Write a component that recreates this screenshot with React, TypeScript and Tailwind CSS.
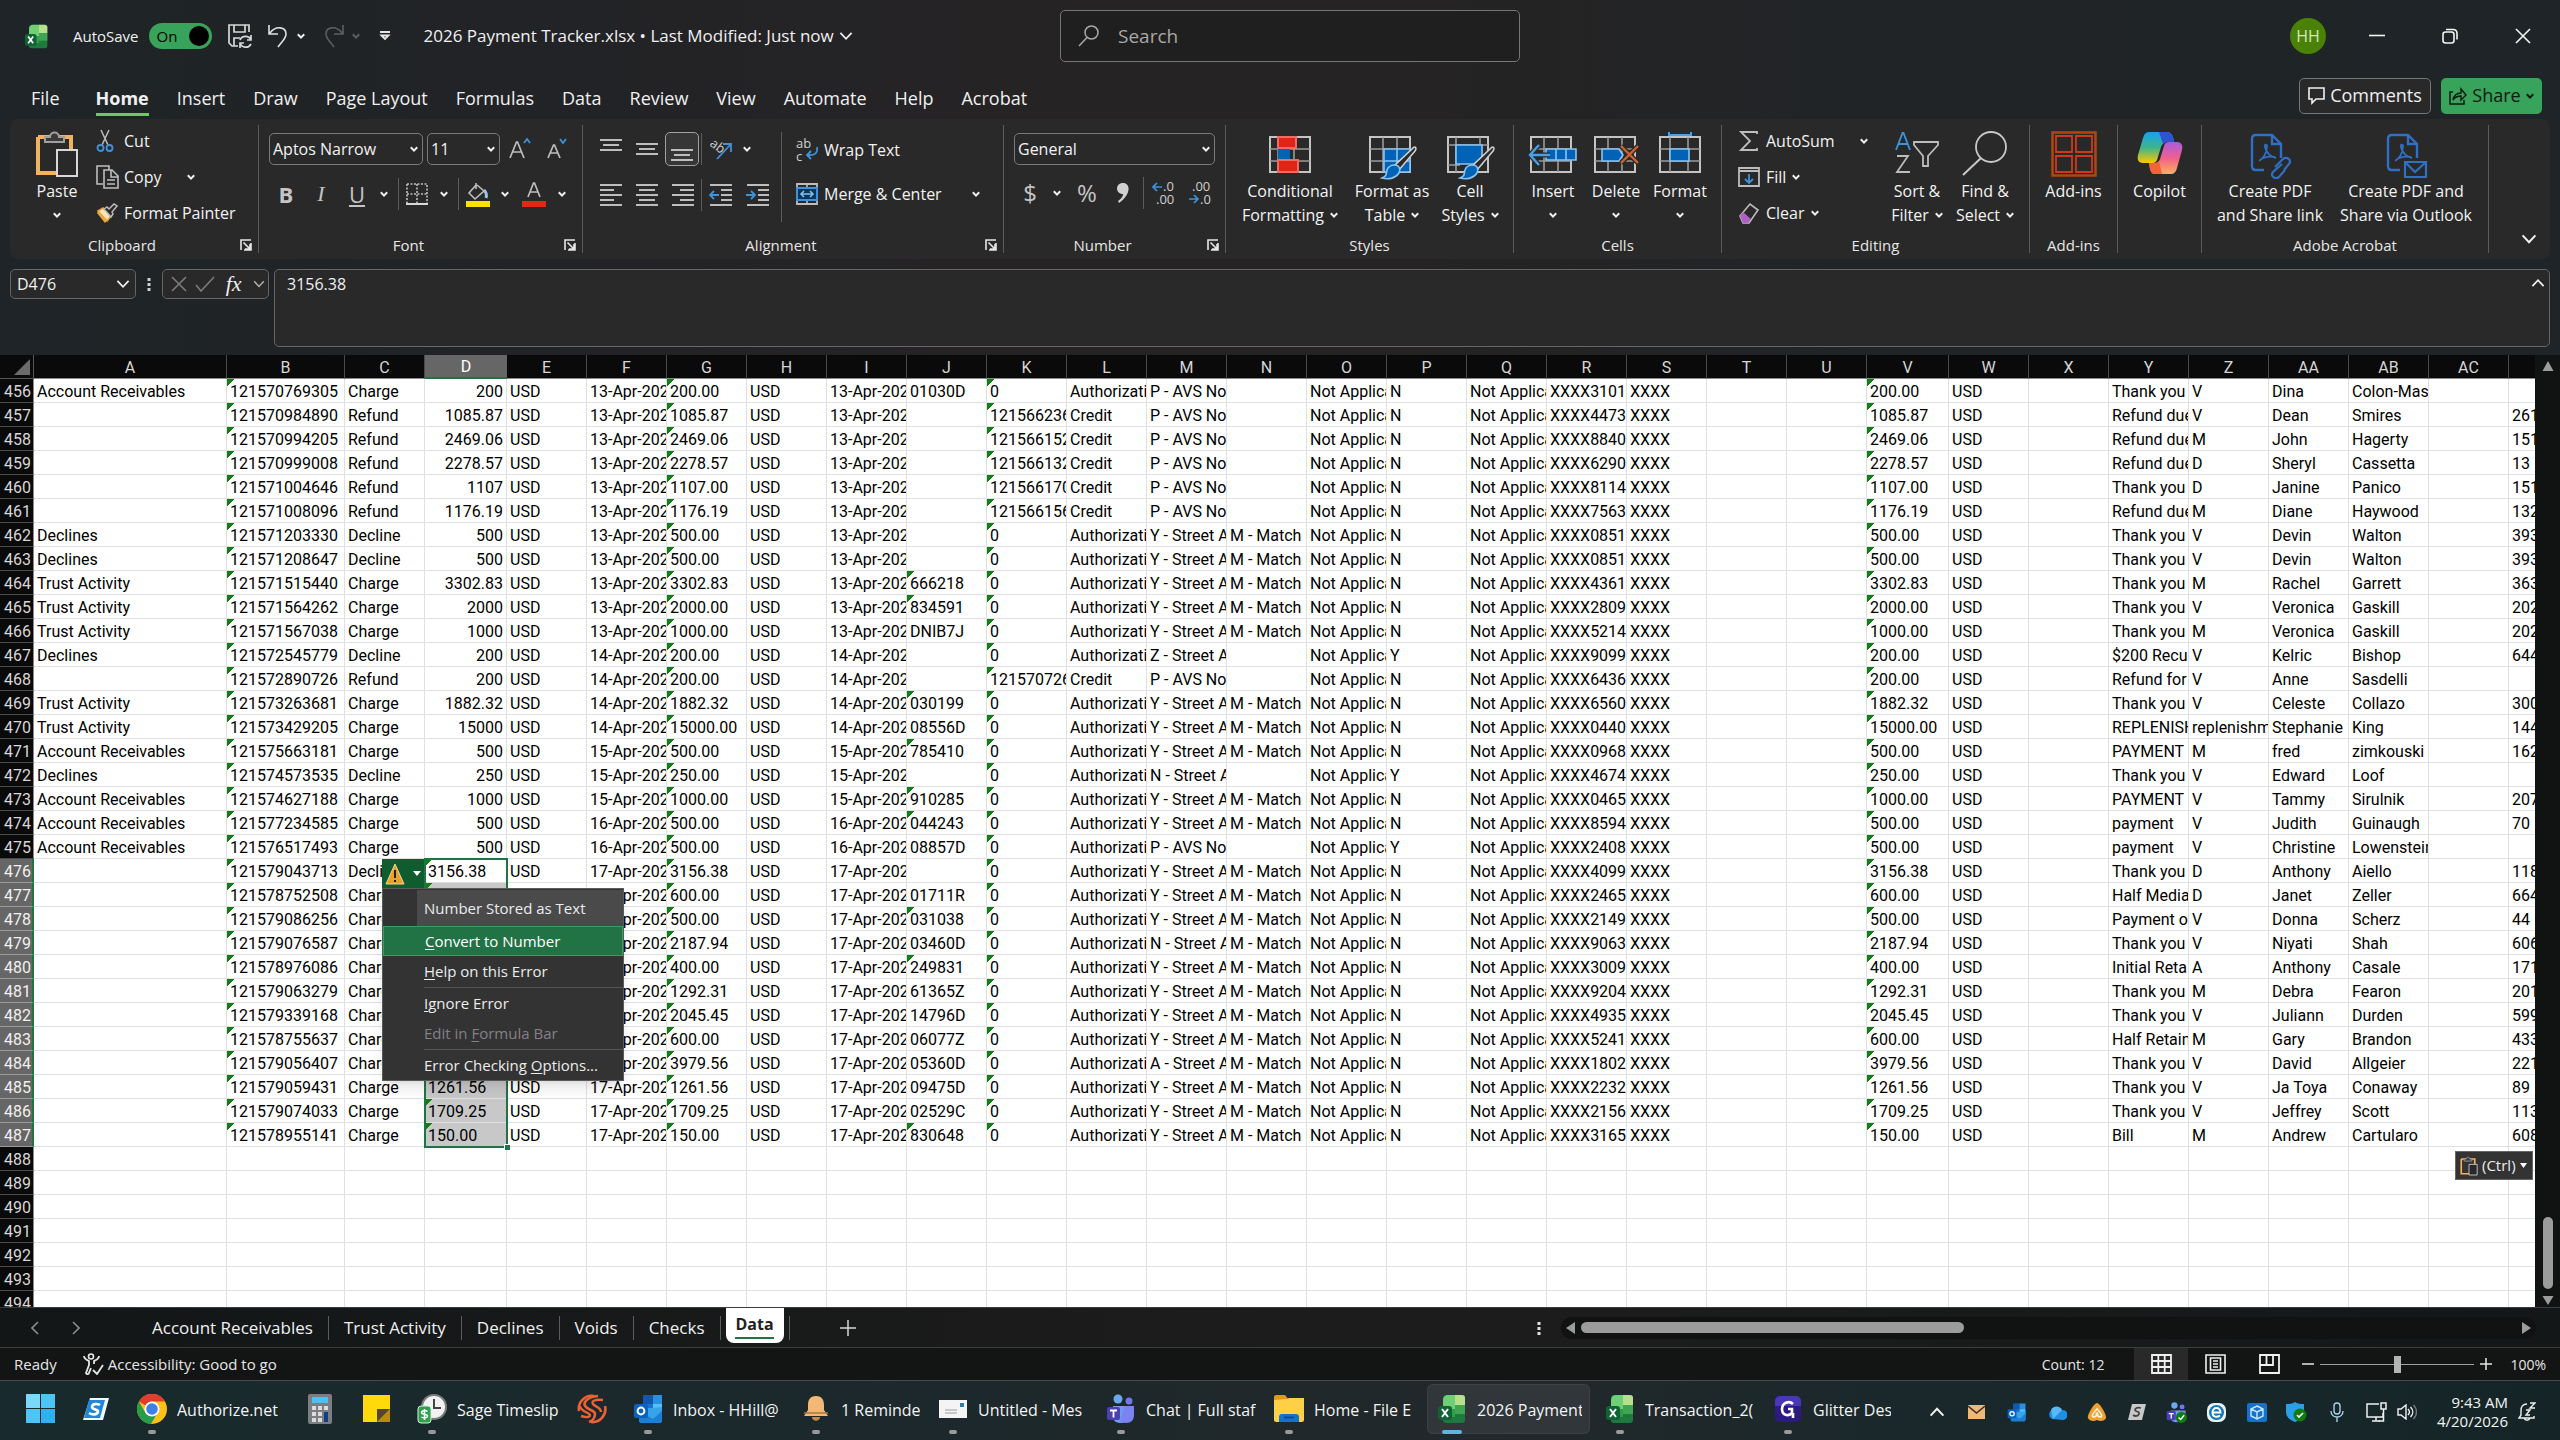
import React from "react";

type Kids = { children?: React.ReactNode };

const Svg = ({ w, h, children, vw = w, vh = h }: { w: number; h: number; vw?: number; vh?: number } & Kids) => (
  <svg width={w} height={h} viewBox={`0 0 ${vw} ${vh}`} fill="none" aria-hidden="true" className="block shrink-0">
    {children}
  </svg>
);

const Chev = ({ s = 8, c = "#f0f0f0", sw = 2 }: { s?: number; c?: string; sw?: number }) => (
  <Svg w={s} h={s} vw={8} vh={8}>
    <path d="M.8 2.2 4 5.6 7.2 2.2" stroke={c} strokeWidth={sw} />
  </Svg>
);

/* ---------- sheet data ---------- */

const AR = "Account Receivables";
const TA = "Trust Activity";
const DE = "Declines";
const TY = "Thank you f";
const RD = "Refund due";

type Row = [string, string, string, string, number, string, string, string, string, string, string, string, string, string, string, string];

const rows: Row[] = [
  [AR, "121570769305", "Charge", "200", 13, "01030D", "0", "P", "", "N", "3101", TY, "V", "Dina", "Colon-Mas", ""],
  ["", "121570984890", "Refund", "1085.87", 13, "", "121566236", "P", "", "N", "4473", RD, "V", "Dean", "Smires", "261"],
  ["", "121570994205", "Refund", "2469.06", 13, "", "121566152", "P", "", "N", "8840", RD, "M", "John", "Hagerty", "151"],
  ["", "121570999008", "Refund", "2278.57", 13, "", "121566132", "P", "", "N", "6290", RD, "D", "Sheryl", "Cassetta", "13"],
  ["", "121571004646", "Refund", "1107", 13, "", "121566170", "P", "", "N", "8114", TY, "D", "Janine", "Panico", "151"],
  ["", "121571008096", "Refund", "1176.19", 13, "", "121566156", "P", "", "N", "7563", RD, "M", "Diane", "Haywood", "132"],
  [DE, "121571203330", "Decline", "500", 13, "", "0", "Y", "M", "N", "0851", TY, "V", "Devin", "Walton", "393"],
  [DE, "121571208647", "Decline", "500", 13, "", "0", "Y", "M", "N", "0851", TY, "V", "Devin", "Walton", "393"],
  [TA, "121571515440", "Charge", "3302.83", 13, "666218", "0", "Y", "M", "N", "4361", TY, "M", "Rachel", "Garrett", "363"],
  [TA, "121571564262", "Charge", "2000", 13, "834591", "0", "Y", "M", "N", "2809", TY, "V", "Veronica", "Gaskill", "202"],
  [TA, "121571567038", "Charge", "1000", 13, "DNIB7J", "0", "Y", "M", "N", "5214", TY, "M", "Veronica", "Gaskill", "202"],
  [DE, "121572545779", "Decline", "200", 14, "", "0", "Z", "", "Y", "9099", "$200 Recu", "V", "Kelric", "Bishop", "644"],
  ["", "121572890726", "Refund", "200", 14, "", "121570726", "P", "", "N", "6436", "Refund for", "V", "Anne", "Sasdelli", ""],
  [TA, "121573263681", "Charge", "1882.32", 14, "030199", "0", "Y", "M", "N", "6560", TY, "V", "Celeste", "Collazo", "300"],
  [TA, "121573429205", "Charge", "15000", 14, "08556D", "0", "Y", "M", "N", "0440", "REPLENISH", "replenishm", "Stephanie", "King", "144"],
  [AR, "121575663181", "Charge", "500", 15, "785410", "0", "Y", "M", "N", "0968", "PAYMENT", "M", "fred", "zimkouski", "162"],
  [DE, "121574573535", "Decline", "250", 15, "", "0", "N", "", "Y", "4674", TY, "V", "Edward", "Loof", ""],
  [AR, "121574627188", "Charge", "1000", 15, "910285", "0", "Y", "M", "N", "0465", "PAYMENT", "V", "Tammy", "Sirulnik", "207"],
  [AR, "121577234585", "Charge", "500", 16, "044243", "0", "Y", "M", "N", "8594", "payment", "V", "Judith", "Guinaugh", "70"],
  [AR, "121576517493", "Charge", "500", 16, "08857D", "0", "P", "", "Y", "2408", "payment", "V", "Christine", "Lowenstein", ""],
  ["", "121579043713", "Decline", "3156.38", 17, "", "0", "Y", "M", "N", "4099", TY, "D", "Anthony", "Aiello", "118"],
  ["", "121578752508", "Charge", "600", 17, "01711R", "0", "Y", "M", "N", "2465", "Half Media", "D", "Janet", "Zeller", "664"],
  ["", "121579086256", "Charge", "500", 17, "031038", "0", "Y", "M", "N", "2149", "Payment of", "V", "Donna", "Scherz", "44"],
  ["", "121579076587", "Charge", "2187.94", 17, "03460D", "0", "N", "M", "N", "9063", TY, "V", "Niyati", "Shah", "606"],
  ["", "121578976086", "Charge", "400", 17, "249831", "0", "Y", "M", "N", "3009", "Initial Reta", "A", "Anthony", "Casale", "171"],
  ["", "121579063279", "Charge", "1292.31", 17, "61365Z", "0", "Y", "M", "N", "9204", TY, "M", "Debra", "Fearon", "201"],
  ["", "121579339168", "Charge", "2045.45", 17, "14796D", "0", "Y", "M", "N", "4935", TY, "V", "Juliann", "Durden", "599"],
  ["", "121578755637", "Charge", "600", 17, "06077Z", "0", "Y", "M", "N", "5241", "Half Retain", "M", "Gary", "Brandon", "433"],
  ["", "121579056407", "Charge", "3979.56", 17, "05360D", "0", "A", "M", "N", "1802", TY, "V", "David", "Allgeier", "221"],
  ["", "121579059431", "Charge", "1261.56", 17, "09475D", "0", "Y", "M", "N", "2232", TY, "V", "Ja Toya", "Conaway", "89"],
  ["", "121579074033", "Charge", "1709.25", 17, "02529C", "0", "Y", "M", "N", "2156", TY, "V", "Jeffrey", "Scott", "113"],
  ["", "121578955141", "Charge", "150", 17, "830648", "0", "Y", "M", "N", "3165", "Bill", "M", "Andrew", "Cartularo", "608"],
];

const letters = "A B C D E F G H I J K L M N O P Q R S T U V W X Y Z AA AB AC".split(" ");
const colWidth: Record<string, string> = { A: "w-[193px]", B: "w-[118px]", D: "w-[82px]", V: "w-[82px]" };

const expand = (r: Row, selected: boolean): string[] => {
  const [a, b, c, d, day, j, k, m, n, p, x, y, z, first, last, ad] = r;
  const fixed = Number(d).toFixed(2);
  const date = `${day}-Apr-202`;
  return [
    a, b, c, selected ? fixed : d, "USD", date, fixed, "USD", date, j, k,
    c === "Refund" ? "Credit" : "Authorizati",
    m === "P" ? "P - AVS Not" : `${m} - Street A`,
    n ? "M - Match" : "", "Not Applica", p, "Not Applica", `XXXX${x}`, "XXXX", "", "",
    fixed, "USD", "", y, z, first, last, "", ad,
  ];
};

const flagged = (col: number, v: string, selected: boolean) =>
  v !== "" && (col === 1 || col === 6 || col === 10 || col === 21 || (col === 3 && selected) || (col === 9 && /^\d+$/.test(v)));

const Sheet = () => (
  <table className="w-full min-w-[2589px] table-fixed border-separate border-spacing-0 font-[Roboto,sans-serif] text-[16px] leading-[21px] text-black">
    <colgroup>
      <col className="w-[34px]" />
      {letters.map((l) => (
        <col key={l} className={colWidth[l] ?? "w-[80px]"} />
      ))}
      <col />
    </colgroup>
    <thead>
      <tr className="h-6 bg-[#0a0a0a] text-[#d6d6d6]">
        <th className="border-r border-b border-[#555] p-0">
          <div className="flex h-[23px] items-end justify-end pr-[3px] pb-[3px]">
            <Svg w={16} h={16}>
              <path d="M16 0v16H0z" fill="#6b6b6b" />
            </Svg>
          </div>
        </th>
        {letters.map((l) => (
          <th
            key={l}
            scope="col"
            className={
              l === "D"
                ? "border-b-2 border-[#217346] bg-[#666] p-0 pt-px font-normal text-white"
                : "border-r border-b border-r-[#4a4a4a] border-b-[#8a8a8a] p-0 pt-px font-normal"
            }
          >
            {l}
          </th>
        ))}
        <th className="border-b border-b-[#8a8a8a] p-0" />
      </tr>
    </thead>
    <tbody>
      {Array.from({ length: 39 }, (_, i) => {
        const selected = i >= 20 && i <= 31;
        const cells = i < rows.length ? expand(rows[i], selected) : Array(30).fill("");
        return (
          <tr key={i} className="h-6">
            <th
              scope="row"
              className={
                selected
                  ? "border-r-2 border-b border-r-[#217346] border-b-[#9a9a9a] bg-[#666] p-0 pt-[2px] pr-px text-right font-normal text-[#f0f0f0]"
                  : "border-r border-b border-r-[#8a8a8a] border-b-[#4a4a4a] bg-[#0a0a0a] p-0 pt-[2px] pr-[2px] text-right font-normal text-[#d6d6d6]"
              }
            >
              {456 + i}
            </th>
            {cells.map((v: string, c: number) => (
              <td
                key={c}
                className={[
                  "overflow-hidden border-r border-b border-[#e0e0e0] px-[3px] pt-[2px] pb-0 whitespace-nowrap",
                  c === 3 && !selected ? "text-right" : "text-left",
                  c === 3 && selected && i > 20 ? "bg-[#c8c8c8]" : "",
                  flagged(c, v, selected) ? "bg-[linear-gradient(135deg,#108010_5px,transparent_5px)]" : "",
                ].join(" ")}
              >
                {v}
              </td>
            ))}
          </tr>
        );
      })}
    </tbody>
  </table>
);

const MenuItem = ({ pre = "", k, post, cls = "" }: { pre?: string; k: string; post: string; cls?: string }) => (
  <button type="button" role="menuitem" className={`flex h-[30px] w-full items-center pl-[41px] text-left ${cls}`}>
    <span>
      {pre}
      <u className="underline-offset-2">{k}</u>
      {post}
    </span>
  </button>
);

const ErrorMenu = () => (
  <div role="menu" className="w-[242px] border border-[#5a5a5a] bg-[#333] text-[15px] text-[#ececec] shadow-lg">
    <div className="ml-[34px] mt-px flex h-9 items-center bg-[#4a4a4a] pl-[7px]">Number Stored as Text</div>
    <MenuItem k="C" post="onvert to Number" cls="border border-[#2fa35c] bg-[#217346] pl-[40px] text-white" />
    <MenuItem k="H" post="elp on this Error" />
    <div className="mt-px ml-[41px] h-px bg-[#555]" />
    <MenuItem k="I" post="gnore Error" />
    <MenuItem pre="Edit in " k="F" post="ormula Bar" cls="text-[#858085]" />
    <div className="mt-px ml-[41px] h-px bg-[#555]" />
    <MenuItem pre="Error Checking " k="O" post="ptions..." />
  </div>
);

/* ---------- ribbon parts ---------- */

const Sep = () => <div className="my-[6px] w-px shrink-0 bg-[#5c5c5c]" />;
const VBar = ({ cls = "h-8" }: { cls?: string }) => <div className={`w-px shrink-0 bg-[#5c5c5c] ${cls}`} />;

const Launcher = ({ name }: { name: string }) => (
  <button type="button" aria-label={`${name} settings`} className="mx-auto">
    <Svg w={12} h={12}>
      <path d="M1 11V1h10M11 4v7H4M3.5 3.5l6 6M10 5v5H5" stroke="#e6e6e6" strokeWidth={1.6} />
    </Svg>
  </button>
);

const Group = ({ w, label, launch, children }: { w: string; label: string; launch?: boolean } & Kids) => (
  <section aria-label={label || "Copilot"} className={`flex shrink-0 flex-col ${w}`}>
    <div className="flex h-[115px]">{children}</div>
    <div className="flex h-[22px] items-center text-center text-[15px] text-[#e6e6e6]">
      <span className="flex-1 whitespace-nowrap">{label}</span>
      {launch && (
        <span className="flex w-6">
          <Launcher name={label} />
        </span>
      )}
    </div>
  </section>
);

const Big = ({ w, icon, l1, l2, chev }: { w: string; icon: React.ReactNode; l1: string; l2?: string; chev?: boolean }) => (
  <button type="button" className={`flex shrink-0 flex-col items-center pt-3 leading-6 ${w}`}>
    <span className="flex h-12 items-start justify-center">{icon}</span>
    <span className="whitespace-nowrap">{l1}</span>
    {(l2 || chev) && (
      <span className="flex h-6 items-center gap-[6px] whitespace-nowrap">
        {l2}
        {chev && <Chev />}
      </span>
    )}
  </button>
);

const Small = ({ icon, label, chev, gap = "gap-[6px]" }: { icon: React.ReactNode; label: string; chev?: boolean; gap?: string }) => (
  <button type="button" className={`flex h-9 items-center whitespace-nowrap ${gap}`}>
    <span className="flex items-center">
      <span className="flex w-7 justify-start">{icon}</span>
      {label}
    </span>
    {chev && <Chev />}
  </button>
);

const Ib = ({ w, label, cls = "", children }: { w: string; label: string; cls?: string } & Kids) => (
  <button type="button" aria-label={label} className={`flex shrink-0 items-center justify-center ${w} ${cls}`}>
    {children}
  </button>
);

const Combo = ({ w, label, value }: { w: string; label: string; value: string }) => (
  <div className={`relative flex h-8 shrink-0 items-center rounded-[5px] border border-[#7a7a7a] bg-[#292929] ${w}`}>
    <select aria-label={label} className="h-full w-full appearance-none bg-transparent pl-[3px] outline-none">
      <option>{value}</option>
    </select>
    <span className="pointer-events-none absolute right-1">
      <Chev />
    </span>
  </div>
);

const g = "#bdbdbd";
const b = "#3f92dc";

const Lines = ({ xs }: { xs: [number, number, number][] }) => (
  <Svg w={24} h={24}>
    {xs.map(([x, y, w]) => (
      <path key={y} d={`M${x} ${y}h${w}`} stroke={g} strokeWidth={2} />
    ))}
  </Svg>
);

const Grid = ({ children, vx = [13, 27] }: { children?: React.ReactNode; vx?: number[] }) => (
  <>
    <path d="M3 6h40v35H3z" stroke="#c4c4c4" strokeWidth={2} />
    <path d={`M3 18h40M3 30h40${vx.map((x) => `M${x + 3} 6v35`).join("")}`} stroke="#9a9a9a" strokeWidth={1.6} />
    {children}
  </>
);

const Brush = () => (
  <>
    <path d="M45 18c3-4 5-1 3 2L32 39l-5-4z" fill="#292929" stroke="#d0d0d0" strokeWidth={1.6} />
    <path d="M28 34c4 0 6 4 4 8-3 5-10 7-17 5 5-2 4-4 5-8 1-3 4-5 8-5z" fill="#0063b8" stroke="#8ac3ef" strokeWidth={1.6} />
  </>
);

const PasteIcon = ({ w = 44, h = 46 }: { w?: number; h?: number }) => (
  <Svg w={w} h={h} vw={44} vh={46}>
    <path d="M3 6h33v14M36 20v-14M22 42H3V6" stroke="#f2b35c" strokeWidth={4} />
    <path d="M10 11V6h5c0-6 9-6 9 0h5v5z" fill="#3a3a3a" stroke="#a0a0a0" strokeWidth={2} />
    <path d="M22 19h20v26H22z" fill="#292929" stroke="#d8d8d8" strokeWidth={2} />
  </Svg>
);

const Excel = ({ s = 30 }: { s?: number }) => (
  <Svg w={s} h={s} vw={30} vh={30}>
    <rect x="6" y="1" width="22" height="28" rx="3" fill="#1e7a3c" />
    <path d="M6 12V6a5 5 0 0 1 5-5h7v14H6z" fill="#6fcf74" />
    <path d="M18 1h7a3 3 0 0 1 3 3v7H18z" fill="#b8e08a" />
    <path d="M18 11h10v9H18z" fill="#3fa552" />
    <path d="M6 15h12v8H6z" fill="#2f9e4b" />
    <rect x="1" y="12" width="14" height="14" rx="3" fill="#116335" />
    <path d="m5 15 6 8M11 15l-6 8" stroke="#fff" strokeWidth={2} />
  </Svg>
);

const PdfDoc = ({ children }: Kids) => (
  <Svg w={44} h={48}>
    <path d="M16 39H8c-3 0-4-1-4-4V8c0-3 1-4 4-4h16l9 9v14M24 4v9h9" stroke="#2f6fc4" strokeWidth={2.4} />
    <path d="M11 30c4-2 8-8 8-15 0-2-3-2-2 1 1 6 6 10 11 11M12 29c4-3 10-4 15-3" stroke="#2f6fc4" strokeWidth={1.8} />
    {children}
  </Svg>
);

const Ribbon = () => (
  <div className="mx-[10px] flex h-[140px] shrink-0 rounded-lg bg-[#292929] text-[16px] text-[#f2f2f2]">
    <Group w="w-[248px]" label="Clipboard" launch>
      <div className="w-[22px]" />
      <Big w="w-[50px]" icon={<PasteIcon />} l1="Paste" chev />
      <div className="ml-[14px] flex flex-col pt-1">
        <Small
          label="Cut"
          icon={
            <Svg w={18} h={24}>
              <path d="M5 1l7 15M13 1 6 16" stroke={g} strokeWidth={1.5} />
              <circle cx="4.5" cy="19" r="3" stroke={b} strokeWidth={1.8} />
              <circle cx="13.5" cy="19" r="3" stroke={b} strokeWidth={1.8} />
            </Svg>
          }
        />
        <Small
          label="Copy"
          chev
          gap="gap-[25px]"
          icon={
            <Svg w={24} h={24}>
              <path d="M7 19H1V1h12v4" stroke={g} strokeWidth={1.6} />
              <path d="M8 5h8l6 6v12H8zM15 5v7h7M11 15h8M11 19h8" stroke={g} strokeWidth={1.6} />
            </Svg>
          }
        />
        <Small
          label="Format Painter"
          icon={
            <Svg w={22} h={20}>
              <path d="M2 8l9 9-2 3L1 10z" fill="#f0a93c" />
              <path d="M2 8l5-3 8 8-4 5z" fill="#fbe3b8" stroke="#e7a23e" strokeWidth={1.5} />
              <path d="M8 6l3-2 2 2 5-5 3 2-5 6 1 2-2 3z" fill="#292929" stroke={g} strokeWidth={1.5} />
            </Svg>
          }
        />
      </div>
    </Group>
    <Sep />
    <Group w="w-[323px]" label="Font" launch>
      <div className="flex flex-col gap-3 pt-[14px] pl-[10px]">
        <div className="flex items-center">
          <Combo w="w-[154px]" label="Font name" value="Aptos Narrow" />
          <div className="w-1" />
          <Combo w="w-[73px]" label="Font size" value="11" />
          <Ib w="w-[38px]" label="Increase font size">
            <Svg w={24} h={24}>
              <path d="M3 21 9.5 5h1L17 21M5.500 15h9" stroke={g} strokeWidth={1.7} />
              <path d="m17 6 3-4 3 4" stroke={b} strokeWidth={1.8} />
            </Svg>
          </Ib>
          <Ib w="w-[36px]" label="Decrease font size">
            <Svg w={24} h={24}>
              <path d="M4 21 9.500 8h1L16 21M6 16h8" stroke={g} strokeWidth={1.7} />
              <path d="m16 2 3 4 3-4" stroke={b} strokeWidth={1.8} />
            </Svg>
          </Ib>
        </div>
        <div className="flex h-[34px] items-center text-[22px] leading-6 text-[#c4c4c4]">
          <Ib w="w-[34px]" label="Bold" cls="font-bold">B</Ib>
          <Ib w="w-[36px]" label="Italic" cls="font-['Liberation_Serif',serif] italic">I</Ib>
          <Ib w="w-[36px]" label="Underline" cls="underline underline-offset-2">U</Ib>
          <Ib w="w-[18px]" label="Underline styles"><Chev /></Ib>
          <div className="w-[5px]" />
          <VBar />
          <Ib w="w-[36px]" label="Borders">
            <Svg w={22} h={22}>
              <path d="M1 1h20v19M1 1v19M11 1v19M1 11h20" stroke={g} strokeWidth={1.6} strokeDasharray="2 1.500" />
              <path d="M0 21h22" stroke="#d8d8d8" strokeWidth={2} />
            </Svg>
          </Ib>
          <Ib w="w-[18px]" label="Border styles"><Chev /></Ib>
          <div className="w-[5px]" />
          <VBar />
          <Ib w="w-[38px]" label="Fill colour">
            <Svg w={24} h={26}>
              <path d="M10 2v6M10 4l-7 8 6 6 9-8-7-6" stroke={g} strokeWidth={1.6} />
              <path d="M18 9c2 2 3 5 2 8" stroke="#9fc6e8" strokeWidth={3} />
              <path d="M0 20h24v6H0z" fill="#fde100" />
            </Svg>
          </Ib>
          <Ib w="w-[16px]" label="Fill colours"><Chev /></Ib>
          <Ib w="w-[42px]" label="Font colour">
            <Svg w={24} h={26}>
              <path d="M6 16 11.500 2h1L18 16M8 11h8" stroke={g} strokeWidth={1.7} />
              <path d="M0 20h24v6H0z" fill="#e12a12" />
            </Svg>
          </Ib>
          <Ib w="w-[14px]" label="Font colours"><Chev /></Ib>
        </div>
      </div>
    </Group>
    <Sep />
    <Group w="w-[420px]" label="Alignment" launch>
      <div className="flex flex-col gap-3 pt-[13px] pl-[10px]">
        <div className="flex h-[34px] items-center">
          <Ib w="w-[36px]" label="Top align"><Lines xs={[[1, 3, 22], [4, 8, 16], [1, 13, 22]]} /></Ib>
          <Ib w="w-[36px]" label="Middle align"><Lines xs={[[1, 7, 22], [4, 12, 16], [1, 17, 22]]} /></Ib>
          <Ib w="w-[34px]" label="Bottom align" cls="h-[34px] rounded-[5px] border border-[#a0a0a0] bg-[#363636]">
            <Lines xs={[[1, 13, 22], [4, 18, 16], [1, 23, 22]]} />
          </Ib>
          <div className="w-[2px]" />
          <VBar />
          <Ib w="w-[40px]" label="Orientation">
            <Svg w={24} h={24}>
              <text x="0" y="11" fontSize="13" fill="#d0d0d0" transform="rotate(38 4 8)">ab</text>
              <path d="M7 22 21 7M13 7h8v8" stroke={b} strokeWidth={1.8} />
            </Svg>
          </Ib>
          <Ib w="w-[10px]" label="Orientation options"><Chev /></Ib>
        </div>
        <div className="flex h-[34px] items-center">
          <Ib w="w-[36px]" label="Align left"><Lines xs={[[1, 2, 22], [1, 7, 14], [1, 12, 22], [1, 17, 14], [1, 22, 22]]} /></Ib>
          <Ib w="w-[36px]" label="Centre"><Lines xs={[[1, 2, 22], [4, 7, 16], [1, 12, 22], [4, 17, 16], [1, 22, 22]]} /></Ib>
          <Ib w="w-[36px]" label="Align right"><Lines xs={[[1, 2, 22], [9, 7, 14], [1, 12, 22], [9, 17, 14], [1, 22, 22]]} /></Ib>
          <VBar />
          <Ib w="w-[38px]" label="Decrease indent">
            <Svg w={24} h={24}>
              <path d="M1 2h22M12 7h11M12 12h11M12 17h11M1 22h22" stroke={g} strokeWidth={2} />
              <path d="M10 12H1M5 8l-4 4 4 4" stroke={b} strokeWidth={1.8} />
            </Svg>
          </Ib>
          <Ib w="w-[36px]" label="Increase indent">
            <Svg w={24} h={24}>
              <path d="M1 2h22M12 7h11M12 12h11M12 17h11M1 22h22" stroke={g} strokeWidth={2} />
              <path d="M0 12h9M5 8l4 4-4 4" stroke={b} strokeWidth={1.8} />
            </Svg>
          </Ib>
        </div>
      </div>
      <VBar cls="mt-[13px] ml-[5px] h-[90px]" />
      <div className="flex flex-col gap-2 pt-[13px] pl-[14px]">
        <Small
          label="Wrap Text"
          icon={
            <Svg w={24} h={24}>
              <text x="0" y="10" fontSize="13" fill="#d0d0d0">ab</text>
              <text x="0" y="23" fontSize="13" fill="#d0d0d0">c</text>
              <path d="M21 9c1 6-2 9-10 8M15 13l-4 4 4 4" stroke={b} strokeWidth={1.8} />
            </Svg>
          }
        />
        <Small
          label="Merge & Center"
          chev
          gap="gap-[30px]"
          icon={
            <Svg w={22} h={24}>
              <path d="M1 2h20v20H1z" stroke={g} strokeWidth={1.8} />
              <path d="M11 2v4M11 18v4" stroke={g} strokeWidth={1.6} />
              <path d="M1 6h20v12H1z" fill="#0f3558" stroke={b} strokeWidth={2} />
              <path d="M5 12h12M8 9l-3 3 3 3M14 9l3 3-3 3" stroke="#7cc0f5" strokeWidth={1.6} />
            </Svg>
          }
        />
      </div>
    </Group>
    <Sep />
    <Group w="w-[221px]" label="Number" launch>
      <div className="flex flex-col gap-3 pt-[14px] pl-[10px]">
        <Combo w="w-[201px]" label="Number format" value="General" />
        <div className="flex h-8 items-center text-[24px] text-[#c4c4c4]">
          <Ib w="w-[32px]" label="Accounting format">$</Ib>
          <Ib w="w-[22px]" label="Accounting styles"><Chev /></Ib>
          <Ib w="w-[38px]" label="Percent">%</Ib>
          <Ib w="w-[34px]" label="Comma style">
            <Svg w={14} h={22}>
              <path d="M7 1c8 0 8 12-4 20l-1-2c4-3 5-5 5-7-8 0-8-11 0-11z" fill="#d0d0d0" />
            </Svg>
          </Ib>
          <div className="w-[3px]" />
          <VBar />
          <Ib w="w-[40px]" label="Increase decimal">
            <Svg w={24} h={26}>
              <text x="11" y="11" fontSize="13" fill="#d0d0d0">.0</text>
              <text x="4" y="24" fontSize="13" fill="#d0d0d0">.00</text>
              <path d="M10 7H1M5 3 1 7l4 4" stroke={b} strokeWidth={1.7} />
            </Svg>
          </Ib>
          <Ib w="w-[32px]" label="Decrease decimal">
            <Svg w={24} h={26}>
              <text x="4" y="11" fontSize="13" fill="#d0d0d0">.00</text>
              <text x="12" y="24" fontSize="13" fill="#d0d0d0">.0</text>
              <path d="M1 19h9M6 15l4 4-4 4" stroke={b} strokeWidth={1.7} />
            </Svg>
          </Ib>
        </div>
      </div>
    </Group>
    <Sep />
    <Group w="w-[287px]" label="Styles">
      <Big
        w="w-[128px]"
        l1="Conditional"
        l2="Formatting"
        chev
        icon={
          <Svg w={46} h={46}>
            <Grid vx={[8, 24]} />
            <path d="M11 18h12v12H11z" fill="#0063b8" />
            <path d="M11 6h18v11H11zM11 29h20v12H11z" fill="#e02416" stroke="#f46a62" strokeWidth={2} />
          </Svg>
        }
      />
      <Big
        w="w-[76px]"
        l1="Format as"
        l2="Table"
        chev
        icon={
          <Svg w={50} h={50}>
            <Grid>
              <path d="M17 18h26v23H17z" fill="#0063b8" stroke="#8ac3ef" strokeWidth={1.6} />
              <path d="M30 18v23M17 30h26" stroke="#8ac3ef" strokeWidth={1.6} />
              <Brush />
            </Grid>
          </Svg>
        }
      />
      <Big
        w="w-[80px]"
        l1="Cell"
        l2="Styles"
        chev
        icon={
          <Svg w={50} h={50}>
            <path d="M3 6h40v35H3z" stroke="#c4c4c4" strokeWidth={2} />
            <path d="M11 6v35M35 6v8M3 14h40M3 34h12" stroke="#9a9a9a" strokeWidth={1.6} />
            <path d="M11 14h26v19H11z" fill="#0063b8" stroke="#8ac3ef" strokeWidth={1.6} />
            <Brush />
          </Svg>
        }
      />
    </Group>
    <Sep />
    <Group w="w-[207px]" label="Cells">
      <div className="w-2" />
      <Big
        w="w-[62px]"
        l1="Insert"
        chev
        icon={
          <Svg w={50} h={46}>
            <Grid />
            <path d="M18 18h30v11H18z" fill="#0063b8" stroke="#8ac3ef" strokeWidth={1.6} />
            <path d="M28 18v11M38 18v11" stroke="#8ac3ef" strokeWidth={1.6} />
            <path d="M22 24H3M11 14 2 24l9 10" stroke="#292929" strokeWidth={5} />
            <path d="M22 24H3M11 14 2 24l9 10" stroke="#48a0e8" strokeWidth={2.4} />
          </Svg>
        }
      />
      <Big
        w="w-[64px]"
        l1="Delete"
        chev
        icon={
          <Svg w={48} h={46}>
            <Grid />
            <path d="M10 18h17l4 6-4 6H10z" fill="#0063b8" stroke="#8ac3ef" strokeWidth={1.6} />
            <path d="m29 15 17 17M46 15 29 32" stroke="#292929" strokeWidth={5} />
            <path d="m29 15 17 17M46 15 29 32" stroke="#d0622c" strokeWidth={2.4} />
          </Svg>
        }
      />
      <Big
        w="w-[64px]"
        l1="Format"
        chev
        icon={
          <Svg w={46} h={46}>
            <path d="M12 1v3h22V1" stroke="#48a0e8" strokeWidth={2} />
            <Grid vx={[10, 28]}>
              <path d="M13 18h19v12H13z" fill="#0063b8" stroke="#8ac3ef" strokeWidth={1.6} />
            </Grid>
          </Svg>
        }
      />
    </Group>
    <Sep />
    <Group w="w-[307px]" label="Editing">
      <div className="flex w-[160px] flex-col items-start pt-1 pl-4">
        <Small
          label="AutoSum"
          chev
          gap="gap-[25px]"
          icon={
            <Svg w={22} h={22}>
              <path d="M19 4V2H3l9 9-9 9h16v-2" stroke={g} strokeWidth={1.8} />
            </Svg>
          }
        />
        <Small
          label="Fill"
          chev
          icon={
            <Svg w={22} h={22}>
              <path d="M1 2h20v18H1zM1 5h20" stroke={g} strokeWidth={1.8} />
              <path d="M11 8v9M7 13l4 4 4-4" stroke={b} strokeWidth={1.8} />
            </Svg>
          }
        />
        <Small
          label="Clear"
          chev
          icon={
            <Svg w={22} h={22}>
              <path d="m2 14 10-12 8 6-9 13H5z" stroke={g} strokeWidth={1.6} />
              <path d="m2 14 3-4 8 7-3 4H5z" fill="#b05fc4" />
            </Svg>
          }
        />
      </div>
      <Big
        w="w-[70px]"
        l1="Sort &"
        l2="Filter"
        chev
        icon={
          <Svg w={46} h={46}>
            <path d="M2 19 8.500 2h1L16 19M4 13h10" stroke={b} strokeWidth={1.8} />
            <path d="M3 25h11L3 41h13" stroke={g} strokeWidth={1.8} />
            <path d="M20 11h24v3L34 25v10h-5V25L20 14z" stroke={g} strokeWidth={1.8} />
          </Svg>
        }
      />
      <Big
        w="w-[66px]"
        l1="Find &"
        l2="Select"
        chev
        icon={
          <Svg w={46} h={46}>
            <circle cx="29" cy="16" r="15" stroke="#c8c8c8" strokeWidth={1.8} />
            <path d="M19 27 1 44" stroke="#c8c8c8" strokeWidth={2} />
          </Svg>
        }
      />
    </Group>
    <Sep />
    <Group w="w-[87px]" label="Add-ins">
      <Big
        w="w-full"
        l1="Add-ins"
        icon={
          <Svg w={46} h={46}>
            <path d="M1.500 1.500h43v43h-43z" stroke="#b0480c" strokeWidth={2.5} />
            <path d="M5 5h16v16H5zM25 5h16v16H25zM5 25h16v16H5zM25 25h16v16H25z" stroke="#d0381c" strokeWidth={1.8} />
          </Svg>
        }
      />
    </Group>
    <Sep />
    <Group w="w-[83px]" label="">
      <Big
        w="w-full"
        l1="Copilot"
        icon={
          <Svg w={46} h={44}>
            <defs>
              <linearGradient id="cpA" x1="0" y1="0" x2="0" y2="1">
                <stop offset="0" stopColor="#18a0f0" />
                <stop offset=".5" stopColor="#3cb58c" />
                <stop offset="1" stopColor="#ffc800" />
              </linearGradient>
              <linearGradient id="cpB" x1="0" y1="0" x2="0" y2="1">
                <stop offset="0" stopColor="#a85be0" />
                <stop offset=".5" stopColor="#f0608c" />
                <stop offset="1" stopColor="#ffae5c" />
              </linearGradient>
            </defs>
            <path d="M12 1h18c3 0 5 2 6 5l1 5h-7c-3 0-5 2-6 5l-4 13c-1 2-2 3-4 3H6c-5 0-6-4-5-8L6 7c1-4 3-6 6-6z" fill="url(#cpA)" />
            <path d="M22 1h8c3 0 5 2 6 5l1 5h-7c-2 0-3 0-4 2z" fill="#2f54d0" />
            <path d="M34 43H18c-3 0-4-2-5-5l-1-6h6c3 0 4-2 5-4l4-13c1-3 2-4 5-4h8c5 0 6 4 5 8l-5 18c-1 4-3 6-6 6z" fill="url(#cpB)" />
            <path d="M12 32h6c2 0 3-1 4-2l3 13h-7c-3 0-4-2-5-5z" fill="#f0643c" />
          </Svg>
        }
      />
    </Group>
    <Sep />
    <Group w="w-[286px]" label="Adobe Acrobat">
      <Big
        w="w-[136px]"
        l1="Create PDF"
        l2="and Share link"
        icon={
          <PdfDoc>
            <path d="m27 36 8-8c4-3 9 1 6 5l-5 6M34 33l-9 8c-3 4 2 8 6 5l6-7" stroke="#2f6fc4" strokeWidth={2.2} />
          </PdfDoc>
        }
      />
      <Big
        w="w-[136px]"
        l1="Create PDF and"
        l2="Share via Outlook"
        icon={
          <PdfDoc>
            <path d="M21 31h21v15H21zM21 31l10 10 11-10" fill="#292929" stroke="#2f6fc4" strokeWidth={2.2} />
          </PdfDoc>
        }
      />
    </Group>
    <Sep />
    <div className="flex flex-1 items-end justify-end pr-[13px] pb-3">
      <button type="button" aria-label="Collapse ribbon"><Chev s={16} sw={1} /></button>
    </div>
  </div>
);

/* ---------- title bar ---------- */

const TitleBar = () => (
  <header className="grid h-[72px] shrink-0 grid-cols-[106fr_46fr_104fr] items-center text-[15px] text-[#f0f0f0]">
    <div className="flex items-center pl-6">
      <Excel s={25} />
      <label className="ml-6 flex items-center gap-[10px]">
        AutoSave
        <input type="checkbox" role="switch" defaultChecked className="sr-only" />
        <span className="flex h-[26px] w-[63px] items-center justify-between rounded-full bg-[#38a35a] pr-[3px] pl-2 text-black">
          On
          <span className="size-5 rounded-full bg-black" />
        </span>
      </label>
      <Ib w="w-[56px]" label="Save">
        <Svg w={26} h={26}>
          <path d="M22 9V2H2v18l3 3h6M7 2v7h11V2M7 23v-8h6" stroke="#d8d8d8" strokeWidth={1.7} />
          <path d="M24 17a6 6 0 0 0-11 0M13 20a6 6 0 0 0 11 1M24 12v5h-4M13 25v-5h4" stroke="#d8d8d8" strokeWidth={1.7} />
        </Svg>
      </Ib>
      <Ib w="w-[20px]" label="Undo">
        <Svg w={20} h={24}>
          <path d="M1 1v9h9M2 9C8 1 18 3 18 10c0 5-4 7-8 13" stroke="#e0e0e0" strokeWidth={1.6} />
        </Svg>
      </Ib>
      <Ib w="w-[26px]" label="Undo history"><Chev /></Ib>
      <div className="w-2" />
      <Ib w="w-[24px]" label="Redo">
        <Svg w={20} h={24}>
          <path d="M19 1v9h-9M18 9C12 1 2 3 2 10c0 5 4 7 8 13" stroke="#5c5f61" strokeWidth={1.6} />
        </Svg>
      </Ib>
      <Ib w="w-[20px]" label="Redo history"><Chev c="#5c5f61" /></Ib>
      <Ib w="w-[38px]" label="Customise toolbar">
        <Svg w={12} h={12}>
          <path d="M1 2h10M2.500 5.500 6 9l3.500-3.500z" stroke="#e6e6e6" strokeWidth={1.8} />
        </Svg>
      </Ib>
      <button type="button" className="ml-5 flex items-center gap-[5px] text-[17px]">
        2026 Payment Tracker.xlsx • Last Modified: Just now
        <Chev s={14} sw={1} />
      </button>
    </div>
    <label className="flex h-[52px] items-center gap-[19px] rounded-[5px] border border-[#767676] bg-[#1f1f1f] pl-[17px]">
      <Svg w={21} h={22}>
        <circle cx="13.500" cy="7.500" r="6.500" stroke="#a8a8a8" strokeWidth={1.5} />
        <path d="M9 12.500 1 21" stroke="#a8a8a8" strokeWidth={1.5} />
      </Svg>
      <input aria-label="Search" placeholder="Search" className="w-full bg-transparent text-[19px] outline-none placeholder:text-[#a8a8a8]" />
    </label>
    <div className="flex items-center justify-end pr-[29px]">
      <span className="flex size-9 items-center justify-center rounded-full bg-[#498205] text-[16px] text-[#d5e8be]">HH</span>
      <Ib w="w-[102px]" label="Minimise"><Svg w={16} h={16}><path d="M0 7.500h16" stroke="#f4f4f4" strokeWidth={1.600} /></Svg></Ib>
      <Ib w="w-[44px]" label="Restore">
        <Svg w={16} h={16}>
          <rect x="1" y="4" width="11" height="11" rx="2.500" stroke="#f4f4f4" strokeWidth={1.6} />
          <path d="M4 1.500h7c2 0 4 1 4 4v6" stroke="#f4f4f4" strokeWidth={1.6} />
        </Svg>
      </Ib>
      <div className="w-[43px]" />
      <Ib w="w-[16px]" label="Close"><Svg w={16} h={16}><path d="m1 1 14 14M15 1 1 15" stroke="#f4f4f4" strokeWidth={1.6} /></Svg></Ib>
    </div>
  </header>
);

const menuTabs = ["File", "Home", "Insert", "Draw", "Page Layout", "Formulas", "Data", "Review", "View", "Automate", "Help", "Acrobat"];

const MenuBar = () => (
  <nav className="flex h-[47px] shrink-0 items-center justify-between pr-[18px] pl-[17px] text-[18px] text-[#f0f0f0]">
    <div className="flex items-center">
      {menuTabs.map((t) => (
        <button key={t} type="button" className={t === "Home" ? "mx-[14px] ml-[22px] border-b-[3px] border-[#6ccb5f] pt-[7px] font-bold leading-[30px]" : "px-[14px] pt-1 leading-[30px]"}>
          {t}
        </button>
      ))}
    </div>
    <div className="flex gap-[10px]">
      <button type="button" className="flex h-9 w-[132px] items-center justify-center gap-[5px] rounded-[5px] border border-[#767676] bg-[#292929]">
        <Svg w={17} h={18}>
          <path d="M1 1h15v11H8l-4 4v-4H1z" stroke="#f0f0f0" strokeWidth={1.6} />
        </Svg>
        Comments
      </button>
      <button type="button" className="flex h-9 w-[101px] items-center justify-center gap-[5px] rounded-[5px] bg-[#38a35a] text-[#0d1a10]">
        <Svg w={18} h={18}>
          <path d="M4 5H1v12h14v-4" stroke="#0d1a10" strokeWidth={1.5} />
          <path d="M4 13c1-5 4-7 8-7V2l5 6-5 5V9c-4 0-6 1-8 4z" stroke="#0d1a10" strokeWidth={1.4} />
        </Svg>
        Share
        <Chev c="#0d1a10" />
      </button>
    </div>
  </nav>
);

const FormulaBar = () => (
  <div className="flex h-[96px] shrink-0 items-start px-[10px] pt-[10px] text-[16px] text-[#f0f0f0]">
    <div className="flex h-[30px] w-[126px] items-center rounded-[5px] border border-[#666] bg-[#292929] pr-[5px]">
      <input aria-label="Name box" defaultValue="D476" className="w-full bg-transparent pl-[6px] outline-none" />
      <Chev s={14} sw={1} />
    </div>
    <div className="flex h-[30px] w-[26px] items-center justify-center">
      <Svg w={4} h={14}><path d="M2 1v13" stroke="#d0d0d0" strokeWidth={3} strokeDasharray="3 2" /></Svg>
    </div>
    <div className="flex h-[30px] w-[107px] items-center justify-between rounded-[5px] border border-[#666] bg-[#292929] pr-[2px] pl-[7px]">
      <Ib w="w-[18px]" label="Cancel"><Svg w={16} h={16}><path d="m1 1 14 14M15 1 1 15" stroke="#7c7c7c" strokeWidth={1.6} /></Svg></Ib>
      <Ib w="w-[20px]" label="Enter"><Svg w={20} h={16}><path d="m1 9 5 6L19 1" stroke="#7c7c7c" strokeWidth={1.6} /></Svg></Ib>
      <Ib w="w-[22px]" label="Insert function" cls="font-['Liberation_Serif',serif] text-[22px] italic leading-6">fx</Ib>
      <Ib w="w-[14px]" label="Functions"><Chev s={12} sw={1} c="#b0b0b0" /></Ib>
    </div>
    <div className="ml-[5px] flex h-[78px] flex-1 items-start rounded-[5px] border border-[#666] bg-[#292929] pr-1">
      <input aria-label="Formula bar" defaultValue="3156.38" className="h-[28px] flex-1 bg-transparent pl-3 outline-none" />
      <button type="button" aria-label="Collapse formula bar" className="mt-[6px] rotate-180"><Chev s={14} sw={1} /></button>
    </div>
  </div>
);

/* ---------- sheet tabs and status bar ---------- */

const SheetTabs = () => (
  <div className="flex h-10 shrink-0 items-center border-t border-[#3c3c3c] bg-[linear-gradient(90deg,#121617,#1d1c1c_50%,#1c1c1c_65%,#131718)] text-[17px] text-[#f0f0f0]">
    <Ib w="w-[40px]" label="Previous sheet" cls="ml-[15px]"><Svg w={8} h={14}><path d="M7 1 1 7l6 6" stroke="#8c8c8c" strokeWidth={1.6} /></Svg></Ib>
    <Ib w="w-[42px]" label="Next sheet"><Svg w={8} h={14}><path d="m1 1 6 6-6 6" stroke="#8c8c8c" strokeWidth={1.6} /></Svg></Ib>
    <div className="ml-10 flex h-full items-center">
      {["Account Receivables", "Trust Activity", "Declines", "Voids", "Checks"].map((t) => (
        <React.Fragment key={t}>
          <button type="button" className="px-[15px]">{t}</button>
          <VBar cls="h-6" />
        </React.Fragment>
      ))}
      <button type="button" className="mx-[5px] -mt-[5px] flex h-[35px] w-[58px] items-center justify-center rounded-b-lg bg-white text-[16px] font-bold text-[#222]">
        <span className="border-b-2 border-[#217346] leading-[26px]">Data</span>
      </button>
      <VBar cls="h-6" />
      <Ib w="w-[36px]" label="Add sheet" cls="ml-[40px]"><Svg w={16} h={16}><path d="M8 0v16M0 8h16" stroke="#d8d8d8" strokeWidth={1.5} /></Svg></Ib>
    </div>
    <div className="ml-auto flex h-full items-center">
      <Svg w={4} h={14}><path d="M2 1v13" stroke="#e0e0e0" strokeWidth={3} strokeDasharray="3 2" /></Svg>
      <div className="mr-6 ml-5 flex h-[22px] w-[975px] items-center rounded-full bg-[#111312] px-1">
        <Svg w={10} h={12}><path d="M10 0v12L1 6z" fill="#9c9c9c" /></Svg>
        <div className="ml-[6px] h-[11px] w-[383px] rounded-full bg-[#9c9c9c]" />
        <div className="flex-1" />
        <Svg w={10} h={12}><path d="M0 0v12l9-6z" fill="#9c9c9c" /></Svg>
      </div>
    </div>
  </div>
);

const StatusBar = () => (
  <div className="flex h-[33px] shrink-0 items-center border-t border-[#3c3c3c] bg-[#131514] text-[15px] text-[#e6e6e6]">
    <span className="pl-[14px]">Ready</span>
    <button type="button" className="ml-[25px] flex items-center gap-1">
      <Svg w={22} h={22}>
        <circle cx="9" cy="3.500" r="2.500" stroke="#e6e6e6" strokeWidth={1.6} />
        <path d="M2 3c0 3 3 4 5 5v4l-3 8c1 2 3 1 3 0l2-5M17 3c0 3-3 4-5 5v3M11 17l4 4 6-9" stroke="#e6e6e6" strokeWidth={1.8} />
      </Svg>
      Accessibility: Good to go
    </button>
    <div className="ml-auto flex h-full items-center pr-[14px] text-[14px]">
      <span>Count: 12</span>
      <Ib w="w-[54px]" label="Normal view" cls="ml-[30px] h-full bg-[#292929]">
        <Svg w={21} h={20}><path d="M1 1h19v18H1zM1 7h19M1 13h19M7.300 1v18M13.700 1v18" stroke="#f0f0f0" strokeWidth={1.8} /></Svg>
      </Ib>
      <Ib w="w-[54px]" label="Page layout view">
        <Svg w={21} h={20}><path d="M1 1h19v18H1zM5.500 4h10v12h-10zM8 7h5M8 10h5M8 13h5" stroke="#f0f0f0" strokeWidth={1.6} /></Svg>
      </Ib>
      <Ib w="w-[54px]" label="Page break view">
        <Svg w={21} h={20}><path d="M1 1h19v18H1zM1 11h13V1M7.500 1v10" stroke="#f0f0f0" strokeWidth={1.8} /></Svg>
      </Ib>
      <Ib w="w-[12px]" label="Zoom out" cls="ml-[6px]"><Svg w={12} h={12}><path d="M0 6h12" stroke="#e6e6e6" strokeWidth={1.5} /></Svg></Ib>
      <input
        type="range"
        aria-label="Zoom"
        defaultValue={50}
        className="mx-[6px] h-[18px] w-[154px] appearance-none bg-transparent [&::-webkit-slider-runnable-track]:h-px [&::-webkit-slider-runnable-track]:bg-[#a0a0a0] [&::-webkit-slider-thumb]:-mt-2 [&::-webkit-slider-thumb]:h-[17px] [&::-webkit-slider-thumb]:w-[7px] [&::-webkit-slider-thumb]:appearance-none [&::-webkit-slider-thumb]:bg-[#b4b4b4]"
      />
      <Ib w="w-[12px]" label="Zoom in"><Svg w={12} h={12}><path d="M0 6h12M6 0v12" stroke="#e6e6e6" strokeWidth={1.5} /></Svg></Ib>
      <span className="ml-[18px]">100%</span>
    </div>
  </div>
);

/* ---------- task bar ---------- */

const Task = ({ w, name, icon, text, dot, active }: { w: string; name: string; icon: React.ReactNode; text?: string; dot?: boolean; active?: boolean }) => (
  <button
    type="button"
    aria-label={name}
    className={`flex h-[50px] shrink-0 items-start rounded-md ${w} ${active ? "mr-[5px] bg-[#30363a] ring-1 ring-[#3b4145] ring-inset" : ""}`}
  >
    <span className="flex h-full w-[50px] shrink-0 flex-col items-center">
      <span className="flex h-[46px] items-center pt-[3px]">{icon}</span>
      {dot && <span className={active ? "h-1 w-5 rounded-full bg-[#5fb4e0]" : "h-1 w-2 rounded-full bg-[#9a9a9a]"} />}
    </span>
    {text && <span className="mr-2 overflow-hidden pt-[3px] leading-[46px] whitespace-nowrap">{text}</span>}
  </button>
);

const OutlookIcon = ({ s = 30 }: { s?: number }) => (
  <Svg w={s} h={s} vw={30} vh={30}>
    <path d="M10 1h19v27H10z" fill="#1b6fc8" />
    <path d="M10 1h10v9H10z" fill="#0f58ae" />
    <path d="M20 1h9v9h-9z" fill="#2b8fe0" />
    <path d="M20 10h9v9h-9z" fill="#55c2f5" />
    <path d="M6 15l23-2v13c0 2-1 3-3 3H9c-2 0-3-1-3-3z" fill="#37a4ea" />
    <path d="M6 17l14 8 9-8v9c0 2-1 3-3 3H9c-2 0-3-1-3-3z" fill="#1c7fd6" />
    <rect x="1" y="10" width="14" height="14" rx="2" fill="#0a62c0" />
    <circle cx="8" cy="17" r="3.400" stroke="#fff" strokeWidth={2} />
  </Svg>
);

const TeamsIcon = ({ s = 30, check }: { s?: number; check?: boolean }) => (
  <Svg w={s} h={s} vw={30} vh={30}>
    <circle cx="12" cy="5" r="4.500" fill="#6aa8f0" />
    <circle cx="23" cy="7" r="3.500" fill="#6f78ee" />
    <path d="M7 12h13v12c0 3-2 5-5 5s-8-1-8-6z" fill="#6f9cf0" />
    <path d="M18 12h10v9c0 5-3 8-8 8l-6-1z" fill="#7b83f3" />
    <rect x="1" y="13" width="13" height="13" rx="2" fill="#4a3fb5" />
    <path d="M4 16.500h7M7.500 16.500v7" stroke="#fff" strokeWidth={1.8} />
    {check && <circle cx="22" cy="22" r="8" fill="#107c10" />}
    {check && <path d="m18 22 3 3 5-6" stroke="#fff" strokeWidth={2} />}
  </Svg>
);

const Tray = ({ name, children }: { name: string } & Kids) => (
  <button type="button" aria-label={name} className="flex w-10 shrink-0 items-center justify-center">{children}</button>
);

const TaskBar = () => (
  <footer className="flex h-[60px] shrink-0 items-start border-t border-[#4a4a4a] bg-[linear-gradient(90deg,#182a2d,#1d282b_40%,#22282b_58%,#1a282b_75%,#152527)] pt-[3px] pl-[15px] text-[16px] text-[#f4f4f4]">
    <Task w="w-[56px]" name="Start" icon={<Svg w={29} h={29}><path d="M0 0h14v14H0z" fill="#7ad8fb" /><path d="M15 0h14v14H15zM0 15h14v14H0z" fill="#4cc5f7" /><path d="M15 15h14v14H15z" fill="#2fb1f0" /></Svg>} />
    <Task
      w="w-[56px]"
      name="Sync"
      icon={
        <Svg w={28} h={24}>
          <path d="M8 1h19l-6 22H1z" fill="#f4f8fc" />
          <path d="M7 3h16l-5 18H2z" fill="#1f86d8" />
          <path d="M18 8c-3-2-8-1-8 2s7 2 6 5-6 3-9 1" stroke="#fff" strokeWidth={2.600} />
        </Svg>
      }
    />
    <Task
      w="w-[168px]"
      name="Authorize.net"
      text="Authorize.net"
      dot
      icon={
        <Svg w={30} h={30}>
          <circle cx="15" cy="15" r="15" fill="#fbc116" />
          <path d="M2 7.500A15 15 0 0 1 28 7.500H15a7.500 7.500 0 0 0-6.500 4z" fill="#e33b2e" />
          <path d="M2 7.500A15 15 0 0 0 14 30l6.500-11.200A7.500 7.500 0 0 1 8.500 19z" fill="#269c4c" />
          <circle cx="15" cy="15" r="7.500" fill="#fff" />
          <circle cx="15" cy="15" r="5.800" fill="#3f7fe8" />
        </Svg>
      }
    />
    <Task
      w="w-[56px]"
      name="Calculator"
      icon={
        <Svg w={24} h={30}>
          <rect width="24" height="30" rx="2" fill="#7c7f82" />
          <path d="M4 3h16v6H4z" fill="#4cc0f0" />
          <path d="M4 12h4v4H4zM10 12h4v4h-4zM16 12h4v4h-4zM4 18h4v4H4zM10 18h4v4h-4zM4 24h4v4H4zM10 24h4v4h-4z" fill="#dcdcdc" />
          <path d="M16 18h4v10h-4z" fill="#0f3f8c" />
        </Svg>
      }
    />
    <Task w="w-[56px]" name="Sticky Notes" icon={<Svg w={27} h={27}><path d="M0 0h27v14L14 27H0z" fill="#ffd90a" /><path d="M14 27V14h13z" fill="#55452a" /><path d="M27 14 14 27h13z" fill="#b98a12" /></Svg>} />
    <Task
      w="w-[160px]"
      name="Sage Timeslips"
      text="Sage Timeslip"
      dot
      icon={
        <Svg w={30} h={30}>
          <circle cx="17" cy="13" r="12" fill="#f2f2f2" stroke="#7d7d7d" strokeWidth={2} />
          <path d="M17 5v9h7" stroke="#444" strokeWidth={2} />
          <rect x="1" y="12" width="13" height="17" rx="3" fill="#2fa04c" stroke="#d8f0dc" />
          <path d="M10.500 17.500c-2-1.500-6-1-6 1s6 1.500 6 3.500-4 2.500-6 1M7.500 15v11" stroke="#fff" strokeWidth={1.5} />
        </Svg>
      }
    />
    <Task
      w="w-[56px]"
      name="Snagit"
      icon={
        <Svg w={30} h={30}>
          <path d="M17 2A13 13 0 0 0 2 17M14 28A13 13 0 0 0 28 12" stroke="#ec6236" strokeWidth={2.6} />
          <path d="M21 2C10 3 5 9 9 13s9 3 9 7-3 7-6 8" stroke="#ec6236" strokeWidth={2.6} />
          <path d="M26 6c-8-1-12 1-10 4s8 3 8 8M4 22c6 2 9 1 9-1s-10-4-10-9" stroke="#ec6236" strokeWidth={2.4} />
        </Svg>
      }
    />
    <Task w="w-[168px]" name="Inbox" text="Inbox - HHill@" dot icon={<OutlookIcon />} />
    <Task
      w="w-[137px]"
      name="Reminders"
      text="1 Reminde"
      dot
      icon={<Svg w={24} h={26}><path d="M12 0c6 0 8 4 8 9v5l4 6H0l4-6V9c0-5 2-9 8-9z" fill="#f3b878" /><path d="M8 21h8c0 5-8 5-8 0z" fill="#c98a48" /><path d="M0 17h24" stroke="#a8743c" strokeWidth={1.5} /></Svg>}
    />
    <Task
      w="w-[168px]"
      name="Untitled message"
      text="Untitled - Mes"
      dot
      icon={<Svg w={28} h={18}><path d="M0 0h28v18H0z" fill="#f4f4f4" /><path d="M21 3h4v4h-4z" fill="#2c7fb0" /><path d="M6 10h12M6 13h12" stroke="#b8b8b8" strokeWidth={1.5} /></Svg>}
    />
    <Task w="w-[168px]" name="Chat" text="Chat | Full staf" dot icon={<TeamsIcon />} />
    <Task
      w="w-[163px]"
      name="File Explorer"
      text="Home - File E"
      dot
      icon={
        <Svg w={30} h={27}>
          <path d="M0 2c0-1 1-2 2-2h9l4 5H0z" fill="#dd9a16" />
          <path d="M0 5l13-1 2-1h15v22c0 1-1 2-2 2H2c-1 0-2-1-2-2z" fill="#ffcf48" />
          <path d="M5 27v-5c0-2 1-3 3-3h14c2 0 3 1 3 3v5z" fill="#1173d0" />
          <path d="M10 22.500h10" stroke="#0a4a90" strokeWidth={2} />
        </Svg>
      }
    />
    <Task w="w-[163px]" name="2026 Payment Tracker" text="2026 Payment" dot active icon={<Excel />} />
    <Task w="w-[168px]" name="Transaction" text="Transaction_2(" dot icon={<Excel />} />
    <Task
      w="w-[136px]"
      name="Glitter Desktop"
      text="Glitter Des"
      dot
      icon={<Svg w={26} h={26}><rect width="26" height="26" rx="5" fill="#2c1a80" /><path d="M0 5a5 5 0 0 1 5-5h16a5 5 0 0 1 5 5v5H0z" fill="#4a37b8" /><path d="M18 8c-4-4-11-1-11 5s6 8 10 4v-4h-4M18 17v5" stroke="#fff" strokeWidth={2.600} /></Svg>}
    />
    <div className="ml-auto flex h-[56px] items-center pr-[24px]">
      <Tray name="Show hidden icons"><span className="rotate-180"><Chev s={16} sw={1} /></span></Tray>
      <Tray name="Mail"><Svg w={17} h={14}><path d="M0 0h17v14H0z" fill="#f0b878" /><path d="m0 1 8.500 7L17 1" stroke="#3c3020" strokeWidth={1.6} /></Svg></Tray>
      <Tray name="Outlook"><OutlookIcon s={19} /></Tray>
      <Tray name="OneDrive"><Svg w={20} h={15}><path d="M5 14a5 5 0 0 1 0-9 6 6 0 0 1 10 0 5 5 0 0 1 1 10z" fill="#1f8fe6" /><path d="M4 5a6 6 0 0 1 11 0L6 14z" fill="#5ab8f5" /></Svg></Tray>
      <Tray name="Sync"><Svg w={20} h={19}><path d="M10 0c3 0 10 12 9 15s-6 4-9 2c-3 2-8 1-9-2S7 0 10 0z" fill="#f0a030" /><path d="M7 14c-3 0-2-3 3-8 5 5 6 8 3 8-2 0-5-4-3-4s-1 4-3 4z" stroke="#fff3d8" strokeWidth={1.6} /></Svg></Tray>
      <Tray name="Scanner"><Svg w={20} h={18}><path d="M5 1h14l-4 16H1z" fill="#c8c8c8" /><path d="M14 5c-3-1-6 0-6 2s5 1 4 4-5 2-6 1" stroke="#444" strokeWidth={1.8} /></Svg></Tray>
      <Tray name="Teams"><TeamsIcon s={21} check /></Tray>
      <Tray name="Endpoint"><Svg w={19} h={19}><rect width="19" height="19" rx="7" fill="#e8f4fb" /><circle cx="9.500" cy="9.500" r="7.500" fill="#1478b8" /><path d="M5.500 9.500h8c0-6-8-6-8 0 0 5 5 5 7.500 3" stroke="#fff" strokeWidth={2} /></Svg></Tray>
      <Tray name="Packages"><Svg w={20} h={19}><rect width="20" height="19" rx="2" fill="#1272cc" /><path d="m10 3 6 3v7l-6 3-6-3V6zM4 6l6 3 6-3M10 9v7" stroke="#cfe6fa" strokeWidth={1.4} /></Svg></Tray>
      <Tray name="Security"><Svg w={21} h={20}><path d="M9 0c3 2 6 2 9 2v8c0 5-4 8-9 10-5-2-9-5-9-10V2c3 0 6 0 9-2z" fill="#2aa0e8" /><circle cx="14" cy="13" r="6.500" fill="#107c10" /><path d="m11 13 2 2 4-4" stroke="#fff" strokeWidth={1.6} /></Svg></Tray>
      <Tray name="Microphone"><Svg w={14} h={20}><rect x="4" y="1" width="6" height="11" rx="3" stroke="#a8d0ea" strokeWidth={1.4} /><path d="M1 9c0 8 12 8 12 0M7 15v5" stroke="#a8d0ea" strokeWidth={1.4} /></Svg></Tray>
      <button type="button" aria-label="Network and volume" className="ml-[9px] flex items-center gap-[9px]">
        <Svg w={22} h={20}><path d="M13 2H1v13h16v-4M6 19h8M10 15v4" stroke="#f0f0f0" strokeWidth={1.5} /><rect x="15" y="1" width="5" height="6" stroke="#f0f0f0" strokeWidth={1.5} /><path d="M17.500 7v12h-5" stroke="#f0f0f0" strokeWidth={1.5} /></Svg>
        <Svg w={20} h={16}><path d="M1 5h3l5-4v14l-5-4H1zM11 5c2 2 2 4 0 6M13.500 3c3 3 3 7 0 10" stroke="#f0f0f0" strokeWidth={1.4} /><path d="M16.500 1c4 4 4 10 0 14" stroke="#777" strokeWidth={1.4} /></Svg>
      </button>
      <div className="ml-[20px] text-right text-[15px] leading-[19px]">
        <div>9:43 AM</div>
        <div>4/20/2026</div>
      </div>
      <button type="button" aria-label="Notifications" className="ml-[10px]">
        <Svg w={18} h={20}>
          <path d="M9 2C4 2 3 5 3 9v4l-2 3h15v-2M6 16c1 3 5 3 6 0M8 8h4l-4 5h4M12 1h5l-5 5h5" stroke="#f0f0f0" strokeWidth={1.4} />
        </Svg>
      </button>
    </div>
  </footer>
);

export default function App() {
  return (
    <div className="flex h-screen w-full flex-col overflow-hidden bg-[#0a0a0a] font-['Open_Sans','Noto_Sans',sans-serif]">
      <div className="flex shrink-0 flex-col bg-[linear-gradient(90deg,#1e2427,#222326_22%,#262324_42%,#252323_55%,#212427_72%,#1e2427)]">
        <TitleBar />
        <MenuBar />
        <Ribbon />
        <FormulaBar />
      </div>
      <main className="flex min-h-0 flex-1">
        <div className="relative min-w-0 flex-1 overflow-hidden bg-white">
          <Sheet />
          <div className="pointer-events-none absolute top-[503px] left-[424px] h-[290px] w-[84px] border-2 border-[#217346]" />
          <div className="absolute top-[789px] left-[504px] size-[6px] border-t border-l border-white bg-[#217346]" />
          <div className="absolute top-[504px] left-[382px]">
            <button type="button" aria-label="Error options" className="flex h-[29px] w-[42px] items-center justify-center gap-2 bg-[#0f5c2e]">
              <Svg w={20} h={22}>
                <path d="M10 1 19 21H1z" fill="#e8a22c" stroke="#f8d49a" />
                <path d="M10 7v8M10 17v2" stroke="#222" strokeWidth={2} />
              </Svg>
              <Svg w={8} h={5}><path d="M0 0h8L4 5z" fill="#fff" /></Svg>
            </button>
            <ErrorMenu />
          </div>
          <button type="button" className="absolute top-[796px] left-[2455px] flex h-[29px] w-[78px] items-center gap-1 border border-[#666] bg-[#333] pl-1 text-[15px] text-[#ececec]">
            <PasteIcon w={18} h={20} />
            (Ctrl)
            <Svg w={7} h={5}><path d="M0 0h7L3.500 5z" fill="#fff" /></Svg>
          </button>
        </div>
        <div className="flex w-[25px] shrink-0 flex-col items-center bg-[#111312] pt-[5px]">
          <Svg w={12} h={12}><path d="M6 1l5.500 10h-11z" fill="#9c9c9c" /></Svg>
          <div className="flex-1" />
          <div className="h-[72px] w-[10px] rounded-full bg-[#9c9c9c]" />
          <Svg w={12} h={18}><path d="M6 16 .5 7h11z" fill="#9c9c9c" /></Svg>
        </div>
      </main>
      <SheetTabs />
      <StatusBar />
      <TaskBar />
    </div>
  );
}
